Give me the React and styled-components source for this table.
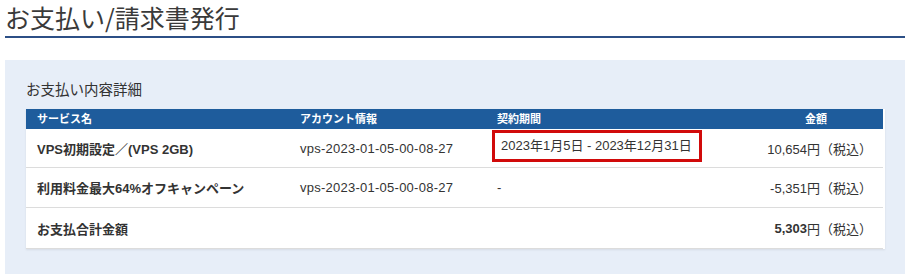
import React from 'react'
import styled, { createGlobalStyle } from 'styled-components'

const GlobalStyle = createGlobalStyle`
  body {
    margin: 0;
    background: #ffffff;
    font-family: "Liberation Sans", "Noto Sans CJK JP", sans-serif;
    color: #333333;
  }
`;

const Page = styled.div`
  padding: 0 6px 0 5px;
`;

const Title = styled.h1`
  margin: 0;
  font-size: 25px;
  font-weight: 400;
  line-height: 34px;
  height: 36px;
  color: #3a3a3a;
  border-bottom: 2px solid #2c4f86;
  font-family: "Noto Sans CJK JP", sans-serif;
`;

const Panel = styled.section`
  margin-top: 22px;
  background: #e7eef8;
  padding: 19px 20px 25px 21px;
`;

const Subtitle = styled.h2`
  margin: 0 0 10px;
  font-size: 14.5px;
  font-weight: 400;
  line-height: 20px;
  color: #333;
  font-family: "Noto Sans CJK JP", sans-serif;
`;

const Table = styled.div`
  display: grid;
  grid-template-columns: 263px 197px 263px 134px;
  background: #ffffff;
  box-shadow: 0 1px 2px rgba(0, 0, 0, 0.08);
`;

const HeadCell = styled.div`
  background: #1e5c9c;
  color: #ffffff;
  font-size: 11px;
  font-weight: 700;
  height: 20px;
  line-height: 20px;
  padding-left: ${p => (p.$center ? 0 : 11)}px;
  text-align: ${p => (p.$center ? 'center' : 'left')};
`;

const Cell = styled.div`
  display: flex;
  align-items: center;
  justify-content: ${p => (p.$right ? 'flex-end' : 'flex-start')};
  height: ${p => p.$h || 39}px;
  padding: ${p => (p.$right ? '0 11px 0 0' : '0 0 0 11px')};
  border-bottom: 1px solid #dcdcdc;
  font-size: 13px;
  font-weight: ${p => (p.$bold ? 700 : 400)};
  letter-spacing: ${p => (p.$wide ? '0.25px' : 'normal')};
  color: #333;
  white-space: nowrap;
`;

// red outline drawn around the contract period
const Marked = styled.span`
  display: inline-block;
  border: 3px solid #d10a0a;
  padding: 5px 7px 5px 6px;
  margin-left: -5px;
  margin-top: -4px;
  line-height: 16px;
`;

const Amount = styled.b`
  font-weight: 700;
`;

const rows = [
  {
    name: 'VPS初期設定／(VPS 2GB)',
    account: 'vps-2023-01-05-00-08-27',
    period: '2023年1月5日 - 2023年12月31日',
    marked: true,
    price: '10,654',
    h: 38,
  },
  {
    name: '利用料金最大64%オフキャンペーン',
    account: 'vps-2023-01-05-00-08-27',
    period: '-',
    price: '-5,351',
    h: 39,
  },
];

export default function App() {
  return (
    <Page>
      <GlobalStyle />
      <Title>お支払い/請求書発行</Title>
      <Panel>
        <Subtitle>お支払い内容詳細</Subtitle>
        <Table>
          <HeadCell>サービス名</HeadCell>
          <HeadCell>アカウント情報</HeadCell>
          <HeadCell>契約期間</HeadCell>
          <HeadCell $center>金額</HeadCell>
          {rows.map((r, i) => (
            <React.Fragment key={i}>
              <Cell $bold $h={r.h}>{r.name}</Cell>
              <Cell $wide $h={r.h}>{r.account}</Cell>
              <Cell $h={r.h}>{r.marked ? <Marked>{r.period}</Marked> : r.period}</Cell>
              <Cell $right $h={r.h}>{r.price}円（税込）</Cell>
            </React.Fragment>
          ))}
          <Cell $bold $h={40}>お支払合計金額</Cell>
          <Cell $h={40} />
          <Cell $h={40} />
          <Cell $right $h={40}><Amount>5,303</Amount>円（税込）</Cell>
        </Table>
      </Panel>
    </Page>
  )
}
